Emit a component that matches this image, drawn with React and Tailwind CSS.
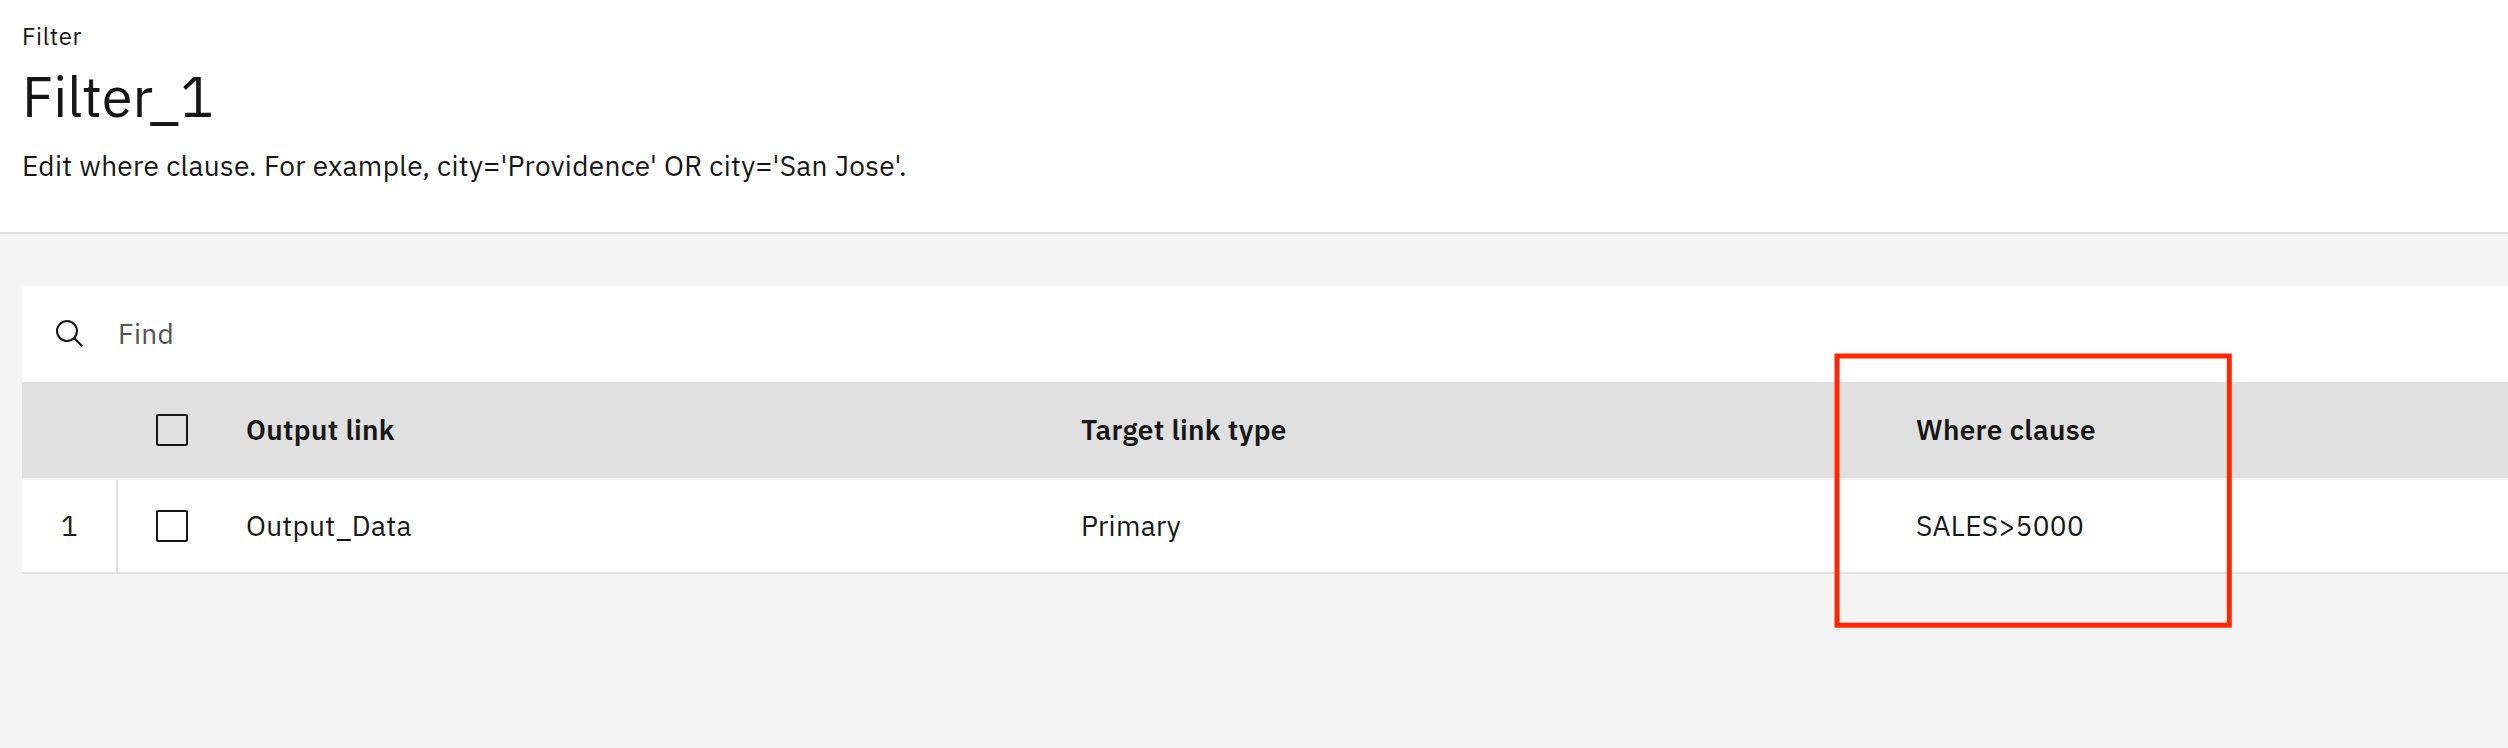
const columns = ['Output link', 'Target link type', 'Where clause'];
const rows = [['Output_Data', 'Primary', 'SALES>5000']];

function SearchIcon() {
  return (
    <svg viewBox="0 0 32 32" className="size-8 shrink-0" fill="currentColor" aria-hidden="true">
      <path d="M29,27.5859l-7.5521-7.5521a11.0177,11.0177,0,1,0-1.4141,1.4141L27.5859,29ZM4,13a9,9,0,1,1,9,9A9.01,9.01,0,0,1,4,13Z" />
    </svg>
  );
}

function Checkbox() {
  return <span className="block size-8 rounded-[2px] border-2 border-[#161616]" />;
}

function Header() {
  return (
    <header className="h-[234px] border-b-2 border-[#e0e0e0] bg-white pt-5 pl-[22px]">
      <p className="text-[24px] leading-[32px] tracking-[0.64px]">Filter</p>
      <h1 className="mt-2 text-[56px] leading-[72px]">Filter_1</h1>
      <p className="mt-[15px] text-[28px] leading-[37px] tracking-[0.32px]">
        Edit where clause. For example, city='Providence' OR city='San Jose'.
      </p>
    </header>
  );
}

function LinkTable() {
  return (
    <div className="text-[28px] leading-[37px] tracking-[0.32px]">
      <div className="flex h-24 items-center bg-[#e0e0e0] font-semibold">
        <div className="w-24 shrink-0" />
        <div className="w-32 shrink-0 pl-[38px]">
          <Checkbox />
        </div>
        {columns.map((name) => (
          <div key={name} className="w-[835px] shrink-0 pb-px">{name}</div>
        ))}
      </div>
      {rows.map((cells, index) => (
        <div key={cells[0]} className="flex h-24 items-center border-t-2 border-b-2 border-t-[#f4f4f4] border-b-[#e0e0e0] bg-white">
          <div className="flex h-full w-24 shrink-0 items-center border-r-2 border-[#e0e0e0] pb-px pl-[39px]">{index + 1}</div>
          <div className="w-32 shrink-0 pl-[38px]">
            <Checkbox />
          </div>
          {cells.map((cell) => (
            <div key={cell} className="w-[835px] shrink-0 pb-px">{cell}</div>
          ))}
        </div>
      ))}
    </div>
  );
}

function Highlight() {
  return (
    <svg className="absolute top-[350px] left-[1831px] h-[280px] w-[404px]" fill="none" aria-hidden="true">
      <rect x="6" y="6" width="392.3" height="269.2" stroke="#ff2600" strokeWidth="5" />
    </svg>
  );
}

export default function App() {
  return (
    <div className="relative h-[748px] w-[2508px] overflow-hidden bg-[#f4f4f4] font-['IBM_Plex_Sans',Roboto,sans-serif] text-[#161616]">
      <Header />
      <main className="overflow-hidden pt-[52px] pl-[22px]">
        <div className="flex h-24 items-center gap-8 bg-white pl-8">
          <SearchIcon />
          <span className="pb-px text-[28px] leading-[37px] tracking-[0.32px] text-[#525252]">Find</span>
        </div>
        <LinkTable />
      </main>
      <Highlight />
    </div>
  );
}
